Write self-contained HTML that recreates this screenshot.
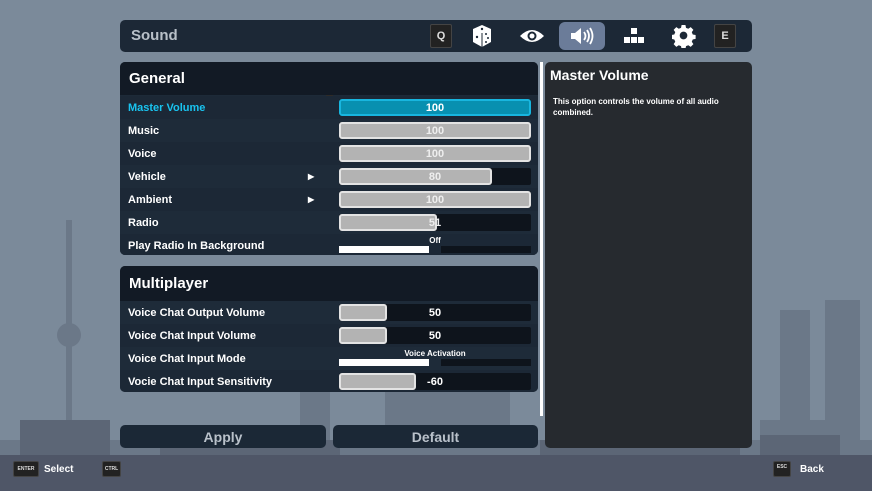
<!DOCTYPE html>
<html><head><meta charset="utf-8"><style>
*{margin:0;padding:0;box-sizing:border-box}
body{width:872px;height:491px;overflow:hidden;position:relative;background:#7b8a9a;font-family:"Liberation Sans",sans-serif;font-weight:bold}
.a{position:absolute}
.bar{left:120px;top:20px;width:632px;height:32px;background:#1c2836;border-radius:5px}
.key{background:#222;border:1px solid #444;border-radius:2px;color:#ddd;font-size:11px;text-align:center;line-height:22px}
.panel{background:#1d2a38;border-radius:5px;overflow:hidden}
.hd{background:#121a25;color:#fff;font-size:15px;padding-left:9px}
.row{position:absolute;left:0;width:418px;height:23px;color:#fff;font-size:11px;line-height:24px;padding-left:8px}
.sep{position:absolute;left:206px;width:7px;background:#2e2b28}
.sl{position:absolute;left:219px;top:3px;width:192px;height:17px;background:#0e141c;border-radius:2px}
.fill{position:absolute;left:0;top:0;height:17px;background:#b3b3b3;border:2px solid #e3e3e3;border-radius:3px}
.val{position:absolute;left:0;top:1px;width:192px;text-align:center;line-height:17px;font-size:11px;color:#eee}
.tg{position:absolute;left:219px;top:2px;width:192px;font-size:8px;color:#fff;text-align:center;line-height:10px}
.arr{position:absolute;left:188px;font-size:8px;color:#fff}
.btn{background:#1b2836;border-radius:5px;color:#b9c1ca;font-size:14px;text-align:center;line-height:24px}
</style></head><body>
<svg class="a" style="left:0;top:0" width="872" height="491">
<g fill="#6b7888">
<rect x="66" y="220" width="6" height="240"/><circle cx="69" cy="335" r="12"/>
<rect x="30" y="430" width="60" height="40"/><rect x="300" y="380" width="30" height="90"/>
<rect x="385" y="300" width="70" height="170"/><rect x="430" y="390" width="80" height="80"/>
<ellipse cx="460" cy="415" rx="30" ry="25"/><rect x="690" y="300" width="40" height="170"/>
<rect x="780" y="310" width="30" height="160"/><rect x="825" y="300" width="35" height="170"/>
<rect x="760" y="420" width="80" height="50"/><rect x="0" y="440" width="872" height="30"/>
</g>
<g fill="#5c6676">
<rect x="20" y="420" width="90" height="40"/><rect x="160" y="440" width="180" height="20"/><rect x="540" y="440" width="200" height="20"/><rect x="760" y="435" width="80" height="25"/>
</g>
<rect x="0" y="455" width="872" height="36" fill="#4f5667"/>
</svg>
<div class="a bar"></div>
<div class="a" style="left:131px;top:27px;color:#b8c0c8;font-size:15px">Sound</div>
<div class="a key" style="left:430px;top:24px;width:22px;height:24px">Q</div>
<svg class="a" style="left:470px;top:23px" width="24" height="26"><path d="M3 6 L12 2 L21 6 L21 19 L12 24 L3 19Z" fill="#fff"/><g fill="#1c2836"><circle cx="12" cy="6" r="1.2"/><circle cx="7" cy="14" r="1.2"/><circle cx="16" cy="11" r="1"/><circle cx="18" cy="15" r="1"/><circle cx="16" cy="19" r="1"/><path d="M12 10 L12 24" stroke="#1c2836" stroke-width="1"/></g></svg>
<svg class="a" style="left:519px;top:28px" width="26" height="16"><path d="M1 8 Q13 -4 25 8 Q13 20 1 8Z" fill="#fff"/><circle cx="13" cy="8" r="4.5" fill="#1c2836"/><circle cx="13" cy="8" r="2.5" fill="#fff"/></svg>
<div class="a" style="left:559px;top:22px;width:46px;height:28px;background:#6b7c99;border-radius:6px"></div>
<svg class="a" style="left:570px;top:27px" width="26" height="18"><path d="M1 6 H5 L11 1 V17 L5 12 H1Z" fill="#fff"/><path d="M14 5 Q17 9 14 13 M17 3 Q21 9 17 15 M20 1 Q25 9 20 17" stroke="#fff" stroke-width="1.8" fill="none"/></svg>
<svg class="a" style="left:622px;top:26px" width="24" height="20"><g fill="#fff"><rect x="9" y="2" width="6" height="6"/><rect x="2" y="11" width="6" height="6"/><rect x="9" y="11" width="6" height="6"/><rect x="16" y="11" width="6" height="6"/></g></svg>
<svg class="a" style="left:672px;top:24px" width="24" height="24" viewBox="0 0 24 24"><path fill="#fff" fill-rule="evenodd" d="M10 1h4l.6 3 2.4 1 2.5-1.7 2.8 2.8L20.6 8.5l1 2.4 3 .6v4l-3 .6-1 2.4 1.7 2.5-2.8 2.8-2.5-1.7-2.4 1-.6 3h-4l-.6-3-2.4-1-2.5 1.7-2.8-2.8 1.7-2.5-1-2.4-3-.6v-4l3-.6 1-2.4L1.7 6.1 4.5 3.3 7 5l2.4-1z M12 8a4 4 0 1 0 0 8a4 4 0 1 0 0-8z" transform="scale(.96)"/></svg>
<div class="a key" style="left:714px;top:24px;width:22px;height:24px">E</div>

<div class="a panel" style="left:120px;top:62px;width:418px;height:193px">
<div class="hd" style="height:33px;line-height:34px">General</div>
<div class="sep" style="top:33px;height:160px"></div>
<div class="row" style="top:34px;color:#19c3ef;background:#1c2836">Master Volume<div class="sl"><div class="fill" style="width:192px;background:#0890b0;border-color:#18b6df"></div><div class="val" style="color:#fff">100</div></div></div>
<div class="row" style="top:57px;background:#1e2b39">Music<div class="sl"><div class="fill" style="width:192px"></div><div class="val">100</div></div></div>
<div class="row" style="top:80px;background:#1c2836">Voice<div class="sl"><div class="fill" style="width:192px"></div><div class="val">100</div></div></div>
<div class="row" style="top:103px;background:#1e2b39">Vehicle<span class="arr">▶</span><div class="sl"><div class="fill" style="width:153px"></div><div class="val">80</div></div></div>
<div class="row" style="top:126px;background:#1c2836">Ambient<span class="arr">▶</span><div class="sl"><div class="fill" style="width:192px"></div><div class="val">100</div></div></div>
<div class="row" style="top:149px;background:#1e2b39">Radio<div class="sl"><div class="fill" style="width:98px"></div><div class="val">51</div></div></div>
<div class="row" style="top:172px;background:#1c2836">Play Radio In Background<div class="tg">Off</div><div class="a" style="left:219px;top:12px;width:90px;height:7px;background:#fff"></div><div class="a" style="left:321px;top:12px;width:90px;height:7px;background:#0e141c"></div></div>
</div>

<div class="a panel" style="left:120px;top:266px;width:418px;height:126px">
<div class="hd" style="height:35px;line-height:36px">Multiplayer</div>
<div class="sep" style="top:35px;height:91px"></div>
<div class="row" style="top:35px;background:#1e2b39">Voice Chat Output Volume<div class="sl"><div class="fill" style="width:48px"></div><div class="val" style="color:#fff">50</div></div></div>
<div class="row" style="top:58px;background:#1c2836">Voice Chat Input Volume<div class="sl"><div class="fill" style="width:48px"></div><div class="val" style="color:#fff">50</div></div></div>
<div class="row" style="top:81px;background:#1e2b39">Voice Chat Input Mode<div class="tg">Voice Activation</div><div class="a" style="left:219px;top:12px;width:90px;height:7px;background:#fff"></div><div class="a" style="left:321px;top:12px;width:90px;height:7px;background:#0e141c"></div></div>
<div class="row" style="top:104px;background:#1c2836">Vocie Chat Input Sensitivity<div class="sl"><div class="fill" style="width:77px"></div><div class="val" style="color:#fff">-60</div></div></div>
</div>

<div class="a" style="left:540px;top:62px;width:3px;height:354px;background:#fff"></div>
<div class="a" style="left:545px;top:62px;width:207px;height:386px;background:#262a2f;border-radius:5px"></div>
<div class="a" style="left:550px;top:67px;color:#fff;font-size:14px">Master Volume</div>
<div class="a" style="left:553px;top:96px;width:190px;color:#fff;font-size:8px;line-height:11px">This option controls the volume of all audio combined.</div>

<div class="a btn" style="left:120px;top:425px;width:206px;height:23px">Apply</div>
<div class="a btn" style="left:333px;top:425px;width:205px;height:23px">Default</div>

<div class="a key" style="left:13px;top:461px;width:26px;height:16px;font-size:5px;line-height:15px">ENTER</div>
<div class="a" style="left:44px;top:464px;color:#fff;font-size:10px">Select</div>
<div class="a key" style="left:102px;top:461px;width:19px;height:16px;font-size:5px;line-height:15px">CTRL</div>
<div class="a key" style="left:773px;top:461px;width:18px;height:16px;font-size:5px;line-height:10px">ESC</div>
<div class="a" style="left:800px;top:464px;color:#fff;font-size:10px">Back</div>
</body></html>
